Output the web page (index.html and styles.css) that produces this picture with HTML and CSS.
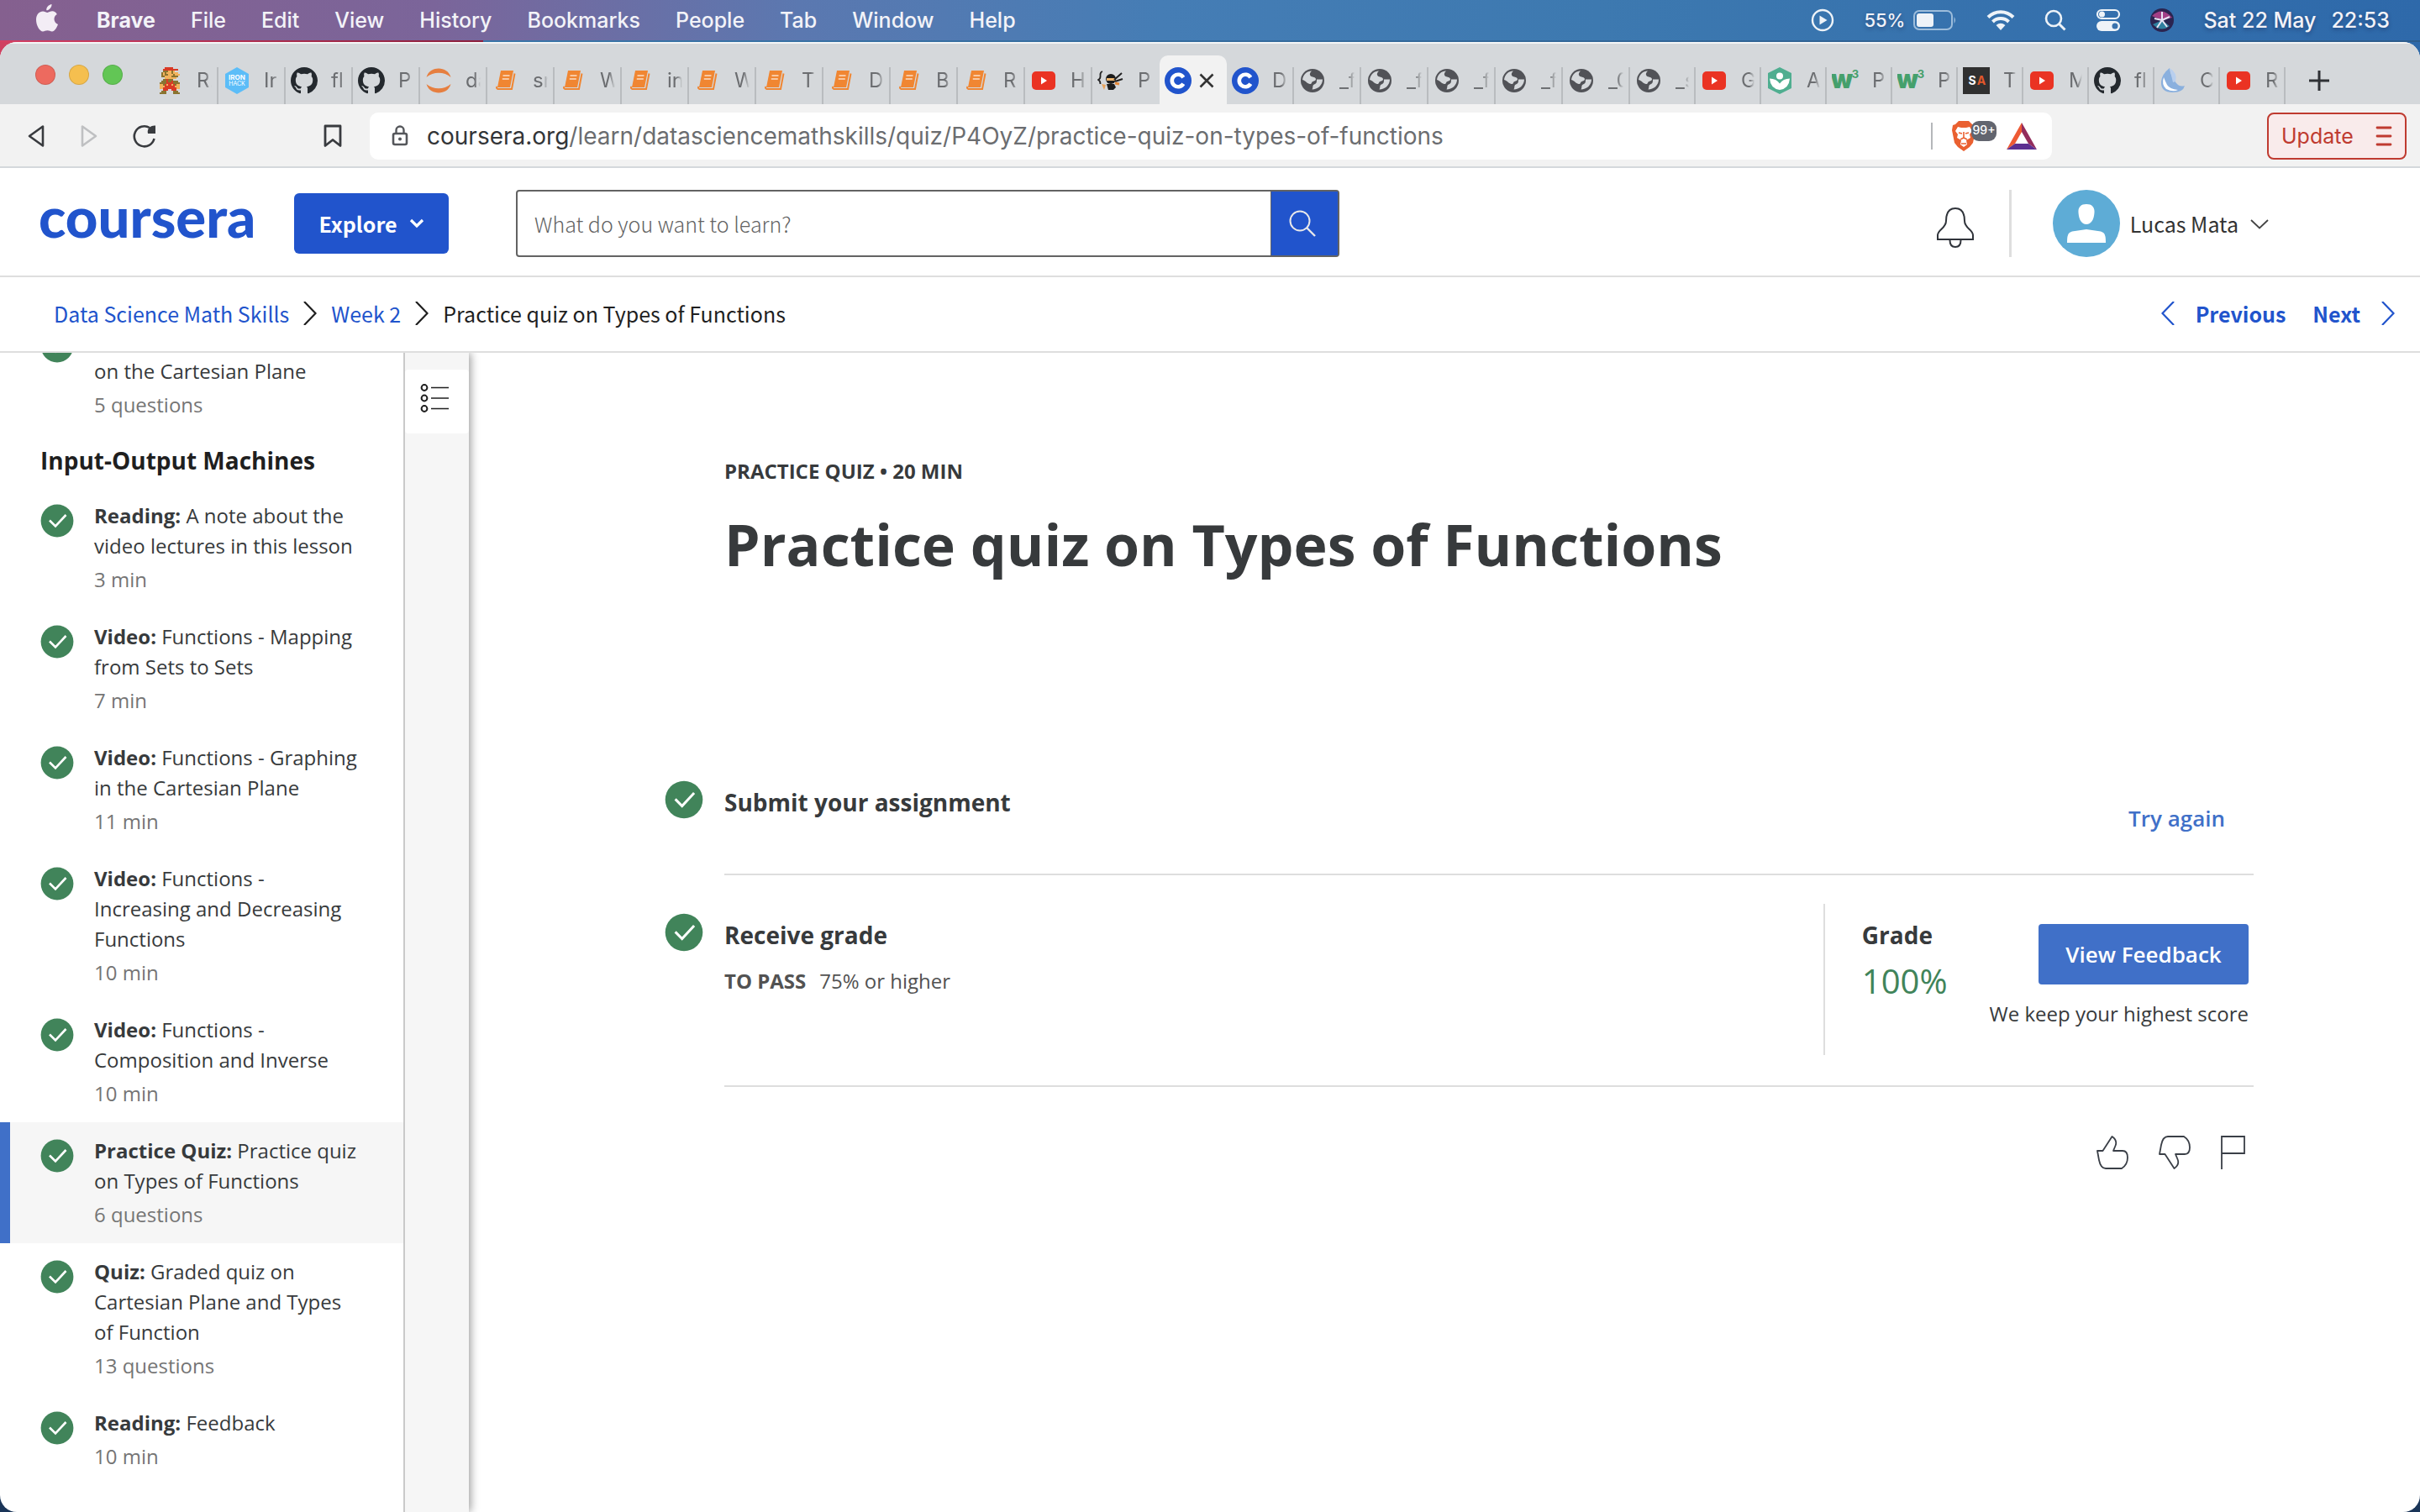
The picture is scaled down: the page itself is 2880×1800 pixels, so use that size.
FILE: index.html
```html
<!DOCTYPE html>
<html lang="en">
<head>
<meta charset="utf-8">
<title>Practice quiz on Types of Functions | Coursera</title>
<link rel="stylesheet" href="styles.css">
</head>
<body>
<svg class="defs" aria-hidden="true">
  <symbol id="check" viewBox="0 0 40 40"><circle cx="20" cy="20" r="19.4" fill="#41845a"/><path d="M11 19.5l7 7L30.500 13" fill="none" stroke="#fff" stroke-width="2.600"/></symbol>
  <symbol id="book" viewBox="0 0 32 32"><path d="M10 4h15l-4 20H6z" fill="#f08632"/><path d="M12.500 10h8M11.800 14h8" stroke="#fbe0c8" stroke-width="1.600"/><path d="M26.500 7.500L23 26H6.500q-2.500-1-1-3" fill="none" stroke="#f08632" stroke-width="2"/></symbol>
  <symbol id="github" viewBox="0 0 16 16"><path fill="#24292e" d="M8 0C3.580 0 0 3.580 0 8c0 3.540 2.290 6.530 5.470 7.590.4.070.55-.17.55-.38 0-.19-.01-.82-.01-1.490-2.010.37-2.530-.49-2.690-.94-.09-.23-.48-.94-.82-1.130-.28-.15-.68-.52-.01-.53.63-.01 1.080.58 1.230.82.72 1.210 1.870.87 2.330.66.07-.52.28-.87.51-1.070-1.780-.2-3.640-.89-3.640-3.950 0-.87.31-1.590.82-2.150-.08-.2-.36-1.020.08-2.120 0 0 .67-.21 2.200.82.64-.18 1.320-.27 2-.27s1.360.09 2 .27c1.530-1.040 2.200-.82 2.200-.82.44 1.100.16 1.920.08 2.120.51.56.82 1.270.82 2.150 0 3.070-1.870 3.750-3.650 3.950.29.25.54.73.54 1.480 0 1.070-.01 1.930-.01 2.200 0 .21.15.46.55.38A8.010 8.010 0 0 0 16 8c0-4.420-3.580-8-8-8z"/></symbol>
  <symbol id="youtube" viewBox="0 0 32 32"><rect x="2" y="5" width="28" height="22" rx="5" fill="#ea3323"/><path d="M13 11.500l7 4.500-7 4.500z" fill="#fff"/></symbol>
  <symbol id="cfav" viewBox="0 0 32 32"><circle cx="16" cy="16" r="16" fill="#2154cc"/><path d="M22.300 12.200A7.300 7.300 0 1 0 22.300 19.800" fill="none" stroke="#fff" stroke-width="4.600"/></symbol>
  <symbol id="globe" viewBox="0 0 32 32"><circle cx="16" cy="16" r="14" fill="#515257"/><path d="M15 4.500c-3 3-2.500 5-.5 6.500 2 1.200 5 .5 5.500 3 .3 1.800-2 2.500-3.500 3-2 .8-1 3-3.500 3-3 0-5-4-9-5C5 8 9.500 4.800 15 4.500zM21 14.500h7c0 7-6 12-12.500 12 1.500-2.500 0-5 2.500-6 3-1 3-3 3-6z" fill="#d5d8db"/></symbol>
  <symbol id="chev" viewBox="0 0 16 28"><path d="M1 0l13.500 14L1 28" fill="none" stroke="currentColor" stroke-width="2.200"/></symbol>
  <symbol id="chevl" viewBox="0 0 16 28"><path d="M15 0L1.500 14 15 28" fill="none" stroke="currentColor" stroke-width="2.200"/></symbol>
  <symbol id="thumb" viewBox="0 0 38 40"><path d="M1 18h6.500L18.500 1c5 3.500 5.500 7.500 4 11l-2.500 6h11c4 0 6 3.500 6 8 0 6-3 10.500-7 13H11c-5 0-7-5-8-10z" fill="none" stroke="#3a3f47" stroke-width="1.800" stroke-linejoin="round"/></symbol>
</svg>

<header class="menubar">
  <nav class="menus" aria-label="Menu bar">
    <button class="menu apple" aria-label="Apple menu"><svg width="28" height="34" viewBox="0 0 28 34"><path fill="#f3edf5" d="M19.500 0c.3 3.800-3 7.300-6.200 7.300C12.800 3.700 16.200.6 19.500 0zM25.800 12c-5 3-4 10 1.200 12-1.500 4-4 8.500-7 8.500-2.200 0-3-1.200-5.500-1.200S11 32.500 9 32.500C5.500 32.500 1 25.500 1 18.500 1 12 5 8.500 9 8.500c2.300 0 4 1.400 5.500 1.400S17.700 8.300 20.500 8.300c2 0 4 1.200 5.300 3.700z"/></svg></button>
    <button class="menu app-name">Brave</button>
    <button class="menu">File</button>
    <button class="menu">Edit</button>
    <button class="menu">View</button>
    <button class="menu">History</button>
    <button class="menu">Bookmarks</button>
    <button class="menu">People</button>
    <button class="menu">Tab</button>
    <button class="menu">Window</button>
    <button class="menu">Help</button>
  </nav>
  <div class="status">
    <svg width="28" height="28" viewBox="0 0 28 28"><circle cx="14" cy="14" r="12" fill="none" stroke="#eef3f8" stroke-width="2.400"/><path d="M10.500 8.500l9 5.500-9 5.500z" fill="#eef3f8"/></svg>
    <div class="battery"><span>55%</span>
      <svg width="52" height="24" viewBox="0 0 52 24"><rect x="1" y="1" width="45" height="22" rx="6" fill="none" stroke="#9dbddb" stroke-width="2"/><rect x="4" y="4" width="20" height="16" rx="3" fill="#eef3f8"/><path d="M48.500 8q3 4 0 8z" fill="#9dbddb"/></svg></div>
    <svg width="34" height="26" viewBox="0 0 34 26"><path d="M2 9.500a21 21 0 0 1 30 0M7.500 15a13.500 13.500 0 0 1 19 0" fill="none" stroke="#eef3f8" stroke-width="4"/><path d="M11.500 19q5.500-4.500 11 0L17 25z" fill="#eef3f8"/></svg>
    <svg width="26" height="26" viewBox="0 0 26 26"><circle cx="11" cy="11" r="9" fill="none" stroke="#eef3f8" stroke-width="2.600"/><path d="M17.500 17.500L24.500 24.500" stroke="#eef3f8" stroke-width="3"/></svg>
    <svg width="30" height="28" viewBox="0 0 30 28"><rect x="2" y="2" width="26" height="10" rx="5" fill="none" stroke="#eef3f8" stroke-width="2.200"/><circle cx="7.500" cy="7" r="3.500" fill="#eef3f8"/><rect x="1" y="15" width="28" height="12" rx="6" fill="#eef3f8"/><circle cx="23" cy="21" r="3.500" fill="#3a72ac"/></svg>
    <svg width="28" height="28" viewBox="0 0 28 28"><circle cx="14" cy="14" r="14" fill="#2b2450"/><path d="M2 9q12-12 24 2l-12 3z" fill="#a33f86"/><path d="M3 19q10 10 20 2l-9-7z" fill="#2f7f9f"/><path d="M14 4v10M5 12l9 2M23 10l-9 4M8 23l6-9 6 8" stroke="#e8e4f4" stroke-width="2" fill="none"/></svg>
    <time class="clock"><span>Sat 22 May</span><span>22:53</span></time>
  </div>
</header>

<div class="window">
  <div class="tabstrip">
    <div class="lights"><button class="light red" aria-label="Close"></button><button class="light yellow" aria-label="Minimise"></button><button class="light green" aria-label="Zoom"></button></div>
    <button class="tab"><svg viewBox="0 0 16 16" shape-rendering="crispEdges"><g stroke-width="1" transform="translate(2 0)"><path stroke="#d93a25" d="M3 .5h5M2 1.500h9M4 7.500h1M4 8.500h1M7 8.500h1M4 9.500h4M3 10.500h6M3 11.500h6M2 12.500h8M2 13.500h3M7 13.500h3"/><path stroke="#f2b35c" d="M5 2.500h4M1 3.500h10M1 4.500h11M3 5.500h7M3 6.500h7M0 10.500h2M10 10.500h2M0 11.500h3M9 11.500h3M0 12.500h2M10 12.500h2M4 10.500h1M7 10.500h1"/><path stroke="#8a7430" d="M2 2.500h3M7 2.500h1M1 3.500h1M3 3.500h1M7 3.500h1M1 4.500h1M3 4.500h2M8 4.500h1M1 5.500h2M7 5.500h4M2 7.500h2M5 7.500h3M1 8.500h3M5 8.500h2M8 8.500h3M0 9.500h4M8 9.500h4M2 10.500h1M9 10.500h1M1 14.500h3M8 14.500h3M0 15.500h4M8 15.500h4"/></g></svg><span>R.</span></button>
    <button class="tab"><svg viewBox="0 0 32 32"><path d="M16 0l14 8v16l-14 8-14-8V8z" fill="#5cbdf8"/><text x="16" y="15" class="fav-text" font-size="8" fill="#fff" font-weight="700">IRON</text><text x="16" y="22" class="fav-text" font-size="7" fill="#fff">HACK</text></svg><span>Ir</span></button>
    <button class="tab"><svg><use href="#github"/></svg><span>fl</span></button>
    <button class="tab"><svg><use href="#github"/></svg><span>P</span></button>
    <button class="tab"><svg viewBox="0 0 32 32"><path d="M1.500 12C5-2 27-2 30.500 12 23 5 9 5 1.500 12zM1.500 20C5 34 27 34 30.500 20 23 27 9 27 1.500 20z" fill="#e67f40"/></svg><span>da</span></button>
    <button class="tab"><svg><use href="#book"/></svg><span>sr</span></button>
    <button class="tab"><svg><use href="#book"/></svg><span>W</span></button>
    <button class="tab"><svg><use href="#book"/></svg><span>in</span></button>
    <button class="tab"><svg><use href="#book"/></svg><span>W</span></button>
    <button class="tab"><svg><use href="#book"/></svg><span>T</span></button>
    <button class="tab"><svg><use href="#book"/></svg><span>D</span></button>
    <button class="tab"><svg><use href="#book"/></svg><span>B</span></button>
    <button class="tab"><svg><use href="#book"/></svg><span>R</span></button>
    <button class="tab"><svg><use href="#youtube"/></svg><span>H</span></button>
    <button class="tab before-active"><svg viewBox="0 0 32 32"><path d="M6 5q-3 1-2.500 5 .3 4-2.500 5 2.500 1 2.500 5" fill="none" stroke="#222" stroke-width="1.800"/><circle cx="16" cy="14" r="6" fill="#1c1c1c"/><path d="M11 13h10v3H11z" fill="#eeb56f"/><path d="M11 20h9l2 4-3 3h-6z" fill="#1c1c1c"/><path d="M5 20l5 1-2 6z" fill="#e9a35c"/><path d="M20 15l9-8M21 17l9-3" stroke="#222" stroke-width="2"/><path d="M21 19l5 1" stroke="#e58a3a" stroke-width="3"/></svg><span>P</span></button>
    <button class="tab active" aria-label="Practice quiz on Types of Functions"><svg><use href="#cfav"/></svg><svg class="close" viewBox="0 0 18 18"><path d="M1.500 1.500l15 15M16.500 1.500l-15 15" stroke="#333" stroke-width="2.600"/></svg></button>
    <button class="tab"><svg><use href="#cfav"/></svg><span>D</span></button>
    <button class="tab"><svg><use href="#globe"/></svg><span>_f</span></button>
    <button class="tab"><svg><use href="#globe"/></svg><span>_f</span></button>
    <button class="tab"><svg><use href="#globe"/></svg><span>_f</span></button>
    <button class="tab"><svg><use href="#globe"/></svg><span>_f</span></button>
    <button class="tab"><svg><use href="#globe"/></svg><span>_0</span></button>
    <button class="tab narrow"><svg><use href="#globe"/></svg><span>_s</span></button>
    <button class="tab narrow"><svg><use href="#youtube"/></svg><span>G</span></button>
    <button class="tab narrow"><svg viewBox="0 0 32 32"><path d="M16 0l14 7v18l-14 7-14-7V7z" fill="#4fae90"/><circle cx="16" cy="10.500" r="4" fill="#fff"/><path d="M4 13.500q8 0 12 6 4-6 12-6-1 12-12 13.500Q5 25.500 4 13.500z" fill="#fff"/></svg><span>A</span></button>
    <button class="tab narrow"><svg viewBox="0 0 32 32"><text x="12" y="25" class="fav-text" font-size="30" font-weight="900" fill="#45a06c">w</text><text x="28" y="13" class="fav-text" font-size="13" font-weight="700" fill="#45a06c">3</text></svg><span>P</span></button>
    <button class="tab narrow"><svg viewBox="0 0 32 32"><text x="12" y="25" class="fav-text" font-size="30" font-weight="900" fill="#45a06c">w</text><text x="28" y="13" class="fav-text" font-size="13" font-weight="700" fill="#45a06c">3</text></svg><span>P</span></button>
    <button class="tab narrow"><svg viewBox="0 0 32 32"><path d="M0 0h32v32H0z" fill="#303030"/><text x="11" y="21" class="fav-text" font-size="14" font-weight="700" fill="#fff">S</text><text x="22" y="21" class="fav-text" font-size="14" font-weight="700" fill="#e2582b">A</text></svg><span>T</span></button>
    <button class="tab narrow"><svg><use href="#youtube"/></svg><span>M</span></button>
    <button class="tab narrow"><svg><use href="#github"/></svg><span>fl</span></button>
    <button class="tab narrow"><svg viewBox="0 0 32 32"><path d="M12 1Q3 8 2 17q-1 13 14 13 12 0 14-8-6 2-10-3-7-8-8-18z" fill="#8ab0de"/><path d="M5 12q-3 9 3 14 8 4 14 1-10-1-13-6-2-4-4-9z" fill="#fff"/><path d="M12 1q10 6 7 16l-3 1z" fill="#b9cfee"/></svg><span>C</span></button>
    <button class="tab narrow"><svg><use href="#youtube"/></svg><span>R</span></button>
    <button class="new-tab" aria-label="New tab"><svg width="24" height="24" viewBox="0 0 24 24"><path d="M12 0v24M0 12h24" stroke="#2f3135" stroke-width="3"/></svg></button>
  </div>

  <div class="toolbar">
    <div class="nav-buttons">
      <button class="icon-btn" aria-label="Back"><svg width="22" height="28" viewBox="0 0 22 28"><path d="M19 2.500v23L3 14z" fill="none" stroke="#393b3f" stroke-width="2.600" stroke-linejoin="round"/></svg></button>
      <button class="icon-btn" aria-label="Forward"><svg width="22" height="28" viewBox="0 0 22 28"><path d="M3 2.500v23L19 14z" fill="none" stroke="#bfc0c2" stroke-width="2.600" stroke-linejoin="round"/></svg></button>
      <button class="icon-btn" aria-label="Reload"><svg width="28" height="28" viewBox="0 0 28 28"><path d="M25.500 17A12 12 0 1 1 20 4" fill="none" stroke="#393b3f" stroke-width="2.600"/><path d="M27 1.500v9.500h-9q-1-5 2-7.500t7-2z" fill="#393b3f"/></svg></button>
    </div>
    <button class="icon-btn bookmark" aria-label="Bookmark"><svg width="22" height="28" viewBox="0 0 22 28"><path d="M2 2h18v23.500l-9-7-9 7z" fill="none" stroke="#393b3f" stroke-width="2.800" stroke-linejoin="round"/></svg></button>
    <div class="omnibox">
      <svg width="20" height="26" viewBox="0 0 20 26"><rect x="2" y="10" width="16" height="13" rx="2" fill="none" stroke="#55575b" stroke-width="2.600"/><path d="M5.500 10V6a4.500 4.500 0 0 1 9 0v4" fill="none" stroke="#55575b" stroke-width="2.400"/><circle cx="10" cy="16.500" r="2" fill="#55575b"/></svg>
      <label class="domain" for="url">coursera.org</label><input id="url" class="path" type="text" value="/learn/datasciencemathskills/quiz/P4OyZ/practice-quiz-on-types-of-functions">
      <button class="shield" aria-label="Brave Shields"><svg width="30" height="36" viewBox="0 0 30 36"><path d="M9 0h12l4 4 3 1 1 6-3 15-4 5-7 5-7-5-4-5L1 11l1-6 3-1z" fill="#ea6030"/><path d="M8 7l4 1h6l4-1 3 5-3 4 1 4-5 3 1 5-4 3-4-3 1-5-5-3 1-4-3-4z" fill="#fff"/><path d="M9 14l4 1M21 14l-4 1M15 13v8M11 22l4-2 4 2M12 27h6" stroke="#ea6030" stroke-width="1.600" fill="none"/></svg><span class="badge">99+</span></button>
      <button class="icon-btn" aria-label="Brave Rewards"><svg width="36" height="32" viewBox="0 0 36 32"><path d="M18 0L0 32l10-7 8-14z" fill="#ee5a34"/><path d="M18 0l18 32-10-7-8-14z" fill="#932c5c"/><path d="M0 32h36l-10-7H10z" fill="#5d2f90"/></svg></button>
    </div>
    <button class="update">Update <svg width="20" height="24" viewBox="0 0 20 24"><path d="M2 2h16M2 12h16M2 22h16" stroke="#bf3b30" stroke-width="2.800" stroke-linecap="round"/></svg></button>
  </div>

  <header class="site-header">
    <a href="#" class="logo">coursera</a>
    <button class="explore">Explore <svg width="18" height="12" viewBox="0 0 18 12"><path d="M2 2l7 7 7-7" fill="none" stroke="#fff" stroke-width="3.200"/></svg></button>
    <form class="search"><input type="text" aria-label="Search" placeholder="What do you want to learn?"><button type="button" aria-label="Search"><svg width="32" height="32" viewBox="0 0 32 32"><circle cx="13" cy="13" r="11.500" fill="none" stroke="#e8e8ea" stroke-width="2"/><path d="M21 21l10 10" stroke="#e8e8ea" stroke-width="2.400"/></svg></button></form>
    <div class="account">
      <button class="bell" aria-label="Notifications"><svg width="46" height="50" viewBox="0 0 46 50"><path d="M2 39v-5c0-7 10-8 10-17 0-10 4-15 11-15s11 5 11 15c0 9 10 10 10 17v5z" fill="none" stroke="#30343b" stroke-width="2"/><path d="M16.500 40c0 5 2 8 6.500 8s6.500-3 6.500-8" fill="none" stroke="#30343b" stroke-width="2"/></svg></button>
      <button class="user"><svg width="80" height="80" viewBox="0 0 80 80"><circle cx="40" cy="40" r="40" fill="#5eacd6"/><path d="M40 17c7 0 10 4 9.500 10C49 35 46 41 40 41s-9-6-9.500-14C30 21 33 17 40 17z" fill="#fff"/><path d="M17 63c0-9 1-12 6-13.500L40 47l17 2.500C62 51 63 54 63 63z" fill="#fff"/></svg>Lucas Mata <svg width="22" height="12" viewBox="0 0 22 12"><path d="M1 1l10 9.500L21 1" fill="none" stroke="#444" stroke-width="1.800"/></svg></button>
    </div>
  </header>

  <nav class="crumbs" aria-label="Breadcrumb">
    <a href="#">Data Science Math Skills</a>
    <svg width="16" height="28"><use href="#chev"/></svg>
    <a href="#">Week 2</a>
    <svg width="16" height="28"><use href="#chev"/></svg>
    <span>Practice quiz on Types of Functions</span>
    <div class="pager"><a href="#"><svg width="16" height="28"><use href="#chevl"/></svg>Previous</a><a href="#">Next<svg width="16" height="28"><use href="#chev"/></svg></a></div>
  </nav>

  <div class="content">
    <aside class="sidebar">
      <a href="#" class="item scrolled"><svg><use href="#check"/></svg><div><p><br>on the Cartesian Plane</p><p class="meta">5 questions</p></div></a>
      <h2>Input-Output Machines</h2>
      <a href="#" class="item"><svg><use href="#check"/></svg><div><p><b>Reading:</b> A note about the video lectures in this lesson</p><p class="meta">3 min</p></div></a>
      <a href="#" class="item"><svg><use href="#check"/></svg><div><p><b>Video:</b> Functions - Mapping from Sets to Sets</p><p class="meta">7 min</p></div></a>
      <a href="#" class="item"><svg><use href="#check"/></svg><div><p><b>Video:</b> Functions - Graphing in the Cartesian Plane</p><p class="meta">11 min</p></div></a>
      <a href="#" class="item"><svg><use href="#check"/></svg><div><p><b>Video:</b> Functions - Increasing and Decreasing Functions</p><p class="meta">10 min</p></div></a>
      <a href="#" class="item"><svg><use href="#check"/></svg><div><p><b>Video:</b> Functions - Composition and Inverse</p><p class="meta">10 min</p></div></a>
      <a href="#" class="item current" aria-current="page"><svg><use href="#check"/></svg><div><p><b>Practice Quiz:</b> Practice quiz on Types of Functions</p><p class="meta">6 questions</p></div></a>
      <a href="#" class="item"><svg><use href="#check"/></svg><div><p><b>Quiz:</b> Graded quiz on Cartesian Plane and Types of Function</p><p class="meta">13 questions</p></div></a>
      <a href="#" class="item"><svg><use href="#check"/></svg><div><p><b>Reading:</b> Feedback</p><p class="meta">10 min</p></div></a>
    </aside>
    <div class="rail"><button aria-label="Contents"><svg width="36" height="36" viewBox="0 0 36 36"><g fill="none" stroke="#1f1f1f" stroke-width="2"><circle cx="5" cy="5.500" r="3.400"/><circle cx="5" cy="18" r="3.400"/><circle cx="5" cy="30.500" r="3.400"/><path d="M13 5.500h21M13 18h21M13 30.500h21" stroke-width="1.600"/></g></svg></button></div>
    <main>
      <p class="eyebrow">PRACTICE QUIZ • 20 MIN</p>
      <h1>Practice quiz on Types of Functions</h1>
      <section class="step submit">
        <svg><use href="#check"/></svg>
        <h3>Submit your assignment</h3>
        <a href="#" class="retry">Try again</a>
      </section>
      <section class="step receive">
        <svg><use href="#check"/></svg>
        <div><h3>Receive grade</h3><p class="pass"><b>TO PASS</b><span>75% or higher</span></p></div>
        <div class="grade">
          <div><h3>Grade</h3><p class="score">100%</p></div>
          <div class="feedback"><button>View Feedback</button><p>We keep your highest score</p></div>
        </div>
      </section>
      <div class="reactions">
        <button aria-label="Like"><svg width="38" height="40"><use href="#thumb"/></svg></button>
        <button aria-label="Dislike"><svg class="flip" width="38" height="40"><use href="#thumb"/></svg></button>
        <button aria-label="Report"><svg width="30" height="40" viewBox="0 0 30 40"><path d="M1 40V1h27v20H1" fill="none" stroke="#3a3f47" stroke-width="1.800"/></svg></button>
      </div>
    </main>
  </div>
</div>
</body>
</html>
```

FILE: styles.css
```css
* { box-sizing: border-box; }
html { height: 100%; }
body {
  margin: 0;
  min-height: 100%;
  display: flex;
  flex-direction: column;
  font-family: "Open Sans", sans-serif;
  background:
    linear-gradient(#cf4060, #cf4060) 0 50px / 40px 40px no-repeat,
    linear-gradient(#2f6aab, #1a3558);
}
h1, h2, h3, p { margin: 0; }
a { color: inherit; text-decoration: none; }
svg { display: block; flex: none; }
button { font: inherit; color: inherit; background: none; border: 0; padding: 0; margin: 0; }
.defs { position: absolute; width: 0; height: 0; }
.fav-text { font-family: Inter, sans-serif; text-anchor: middle; }

/* macOS menu bar */
.menubar {
  height: 50px;
  padding: 0 36px 0 42px;
  display: flex;
  align-items: center;
  justify-content: space-between;
  border-bottom: 2px solid;
  border-image: linear-gradient(90deg, #d43f63 0, #8c1f3d 20%, #3a75a8 20%, #2d5c8c) 1;
  font: 500 25px/48px Inter, sans-serif;
  color: #f3f3f8;
  text-shadow: 0 2px 5px rgba(20, 20, 60, .4);
  background: linear-gradient(90deg, #85608f 0, #7b659a 18%, #5b78b0 33%, #457db5 48%, #3d79b0 66%, #2e69aa);
}
.menus { display: flex; gap: 42px; }
.menu { display: flex; align-items: center; }
.apple { padding: 0 3px 4px 0; }
.app-name { font-weight: 700; }
.status { display: flex; align-items: center; gap: 35px; }
.battery { display: flex; align-items: center; gap: 10px; font-size: 22px; }
.clock { display: flex; gap: 18px; }

/* Browser window */
.window {
  flex: 1;
  display: flex;
  flex-direction: column;
  overflow: hidden;
  border-radius: 20px;
  background: #fff;
}
.tabstrip {
  height: 74px;
  display: flex;
  align-items: flex-end;
  background: #d5d8db;
  box-shadow: inset 0 2px 0 #f4f5f6;
}
.lights { width: 180px; padding: 0 0 23px 42px; display: flex; gap: 16px; flex: none; }
.light { width: 24px; height: 24px; border-radius: 50%; border: 1px solid rgba(0, 0, 0, .12); }
.red { background: #ed6a5f; }
.yellow { background: #f5bf4f; }
.green { background: #62c655; }
.tab {
  flex: 0 1 80px;
  height: 44px;
  padding: 0 6px 12px;
  display: flex;
  align-items: center;
  gap: 16px;
  overflow: hidden;
  border-right: 2px solid #b9bcbf;
  font: 24px/32px Inter, sans-serif;
  color: #6b6d70;
}
.tab.narrow { flex-basis: 78px; }
.tab svg { width: 32px; height: 32px; }
.tab span {
  flex: 1;
  overflow: hidden;
  text-align: left;
  -webkit-mask-image: linear-gradient(90deg, #000 60%, transparent);
  mask-image: linear-gradient(90deg, #000 60%, transparent);
}
.tab.before-active { border-right-color: transparent; }
.tab.active { height: 58px; padding-top: 14px; gap: 9px; border: 0; border-radius: 10px 10px 0 0; background: #f2f2f2; }
.tab .close { width: 18px; height: 18px; }
.new-tab { padding: 0 28px 16px; }

.toolbar {
  height: 76px;
  padding: 2px 16px 0 32px;
  display: flex;
  align-items: center;
  background: #f2f2f2;
  border-bottom: 2px solid #d4d8dc;
}
.nav-buttons { display: flex; gap: 41px; }
.bookmark { margin: 0 33px 0 199px; }
.omnibox {
  flex: 1;
  height: 56px;
  padding: 0 18px 0 26px;
  display: flex;
  align-items: center;
  border-radius: 10px;
  background: #fff;
  font: 28px/40px Inter, sans-serif;
}
.domain { margin-left: 22px; color: #333538; }
.path { flex: 1; min-width: 0; border: 0; padding: 0; outline: 0; font: inherit; color: #6b6d70; background: none; }
.shield { display: flex; margin-right: 12px; padding-left: 22px; border-left: 2px solid #b5b7ba; height: 32px; align-items: center; }
.badge { height: 24px; width: 30px; margin: -12px 0 0 -6px; border-radius: 9px; background: #62656f; color: #fff; font: 500 14px/22px Inter, sans-serif; z-index: 1; text-align: center; }
.update {
  width: 166px;
  height: 56px;
  margin-left: 256px;
  padding: 0 15px;
  display: flex;
  align-items: center;
  justify-content: space-between;
  border: 2px solid #bf3b30;
  border-radius: 8px;
  background: #f9ebeb;
  color: #bf3b30;
  font: 25px/40px Inter, sans-serif;
}

/* Coursera header */
.site-header, .crumbs, .explore, .search input { font-family: "Noto Sans CJK SC", sans-serif; }
.site-header {
  height: 130px;
  padding: 0 180px 0 46px;
  display: flex;
  align-items: center;
  border-bottom: 2px solid #dedede;
}
.site-header .logo { width: 304px; font: 900 67px/80px Lato, sans-serif; color: #2154cc; padding-bottom: 14px; }
.explore {
  width: 184px;
  height: 72px;
  margin: 4px 80px 0 0;
  display: flex;
  align-items: center;
  justify-content: center;
  gap: 14px;
  border-radius: 6px;
  background: #2154cc;
  color: #fff;
  font-size: 25px;
  font-weight: 700;
}
.search { width: 980px; height: 80px; margin-top: 4px; display: flex; border: 2px solid #636363; border-radius: 4px; }
.search input { flex: 1; min-width: 0; padding: 0 20px; border: 0; outline: 0; font-size: 25px; font-weight: 300; background: none; }
.search input::placeholder { color: #636363; opacity: 1; }
.search button { width: 80px; padding-right: 6px; background: #2154cc; border-left: 1px solid #636363; display: grid; place-items: center; }
.account { margin: 4px 0 0 auto; display: flex; align-items: center; height: 80px; }
.bell { padding: 10px 41px 0 0; }
.user { height: 80px; padding-left: 49px; display: flex; align-items: center; border-left: 3px solid #dedede; color: #333; font-size: 25px; }
.user svg:first-child { margin-right: 12px; }
.user svg:last-child { margin: 2px 0 0 14px; }

.crumbs {
  height: 90px;
  padding: 0 30px 2px 64px;
  display: flex;
  align-items: center;
  gap: 17px;
  border-bottom: 2px solid #dedede;
  font-size: 25px;
  color: #1f1f1f;
}
.crumbs a { color: #2154cc; }
.pager { margin-left: auto; display: flex; gap: 32px; font-weight: 700; }
.pager a { display: flex; align-items: center; gap: 25px; }

/* Course outline */
.content { flex: 1; display: flex; }
.sidebar { width: 482px; border-right: 2px solid #c9c9c9; font-size: 24px; line-height: 36px; color: #373a3c; overflow: hidden; }
.sidebar h2 { padding: 14px 48px; font-size: 28px; line-height: 36px; font-weight: 700; color: #1f1f1f; }
.item { display: flex; gap: 24px; padding: 16px 50px 16px 48px; }
.item.scrolled { margin-top: -48px; }
.item svg { width: 40px; height: 40px; margin-top: 4px; }
.item .meta { margin-top: 4px; color: #757575; }
.item.current { background: linear-gradient(90deg, #4070c8 12px, #f6f6f6 12px); }
.rail { width: 76px; padding-top: 20px; background: #f6f6f6; box-shadow: 2px 0 10px rgba(0, 0, 0, .4); clip-path: inset(0 -14px 0 0); }
.rail button { width: 76px; height: 76px; padding: 16px 22px 24px 18px; background: #fff; border-radius: 4px; }

/* Quiz page */
main { flex: 1; padding: 123px 198px 0 233px; color: #373a3c; font-size: 24px; line-height: 36px; }
.eyebrow { padding-left: 71px; font-weight: 700; }
h1 { padding-left: 71px; margin-top: 23px; font-size: 68px; line-height: 92px; font-weight: 700; }
h3 { font-size: 28px; line-height: 36px; font-weight: 700; }
.step { position: relative; display: grid; grid-template-columns: 46px 1fr auto; column-gap: 25px; align-items: start; }
.step > svg { width: 46px; height: 46px; }
.step::after { content: ""; position: absolute; left: 71px; right: 0; bottom: 0; height: 2px; background: #dedede; }
.submit { margin-top: 235px; height: 113px; }
.submit h3 { padding-top: 8px; }
.retry { padding: 27px 34px 0 0; color: #4070c8; font-size: 26px; font-weight: 600; }
.receive { padding: 34px 0 38px; }
.receive > svg { margin-top: 11px; }
.receive h3 { padding-top: 19px; }
.pass { margin-top: 19px; display: flex; gap: 16px; color: #525252; }
.grade { min-height: 180px; padding: 0 6px 0 44px; display: flex; gap: 50px; border-left: 2px solid #dedede; }
.score { margin-top: 11px; font-size: 40px; line-height: 52px; color: #41845a; }
.feedback { padding-top: 24px; display: flex; flex-direction: column; align-items: flex-end; gap: 17px; }
.feedback button { width: 250px; height: 72px; border-radius: 4px; background: #4070c8; color: #fff; font-size: 26px; font-weight: 600; }
.reactions { margin-top: 58px; padding-right: 9px; display: flex; justify-content: flex-end; gap: 36px; }
.flip { transform: scaleY(-1); }
```
